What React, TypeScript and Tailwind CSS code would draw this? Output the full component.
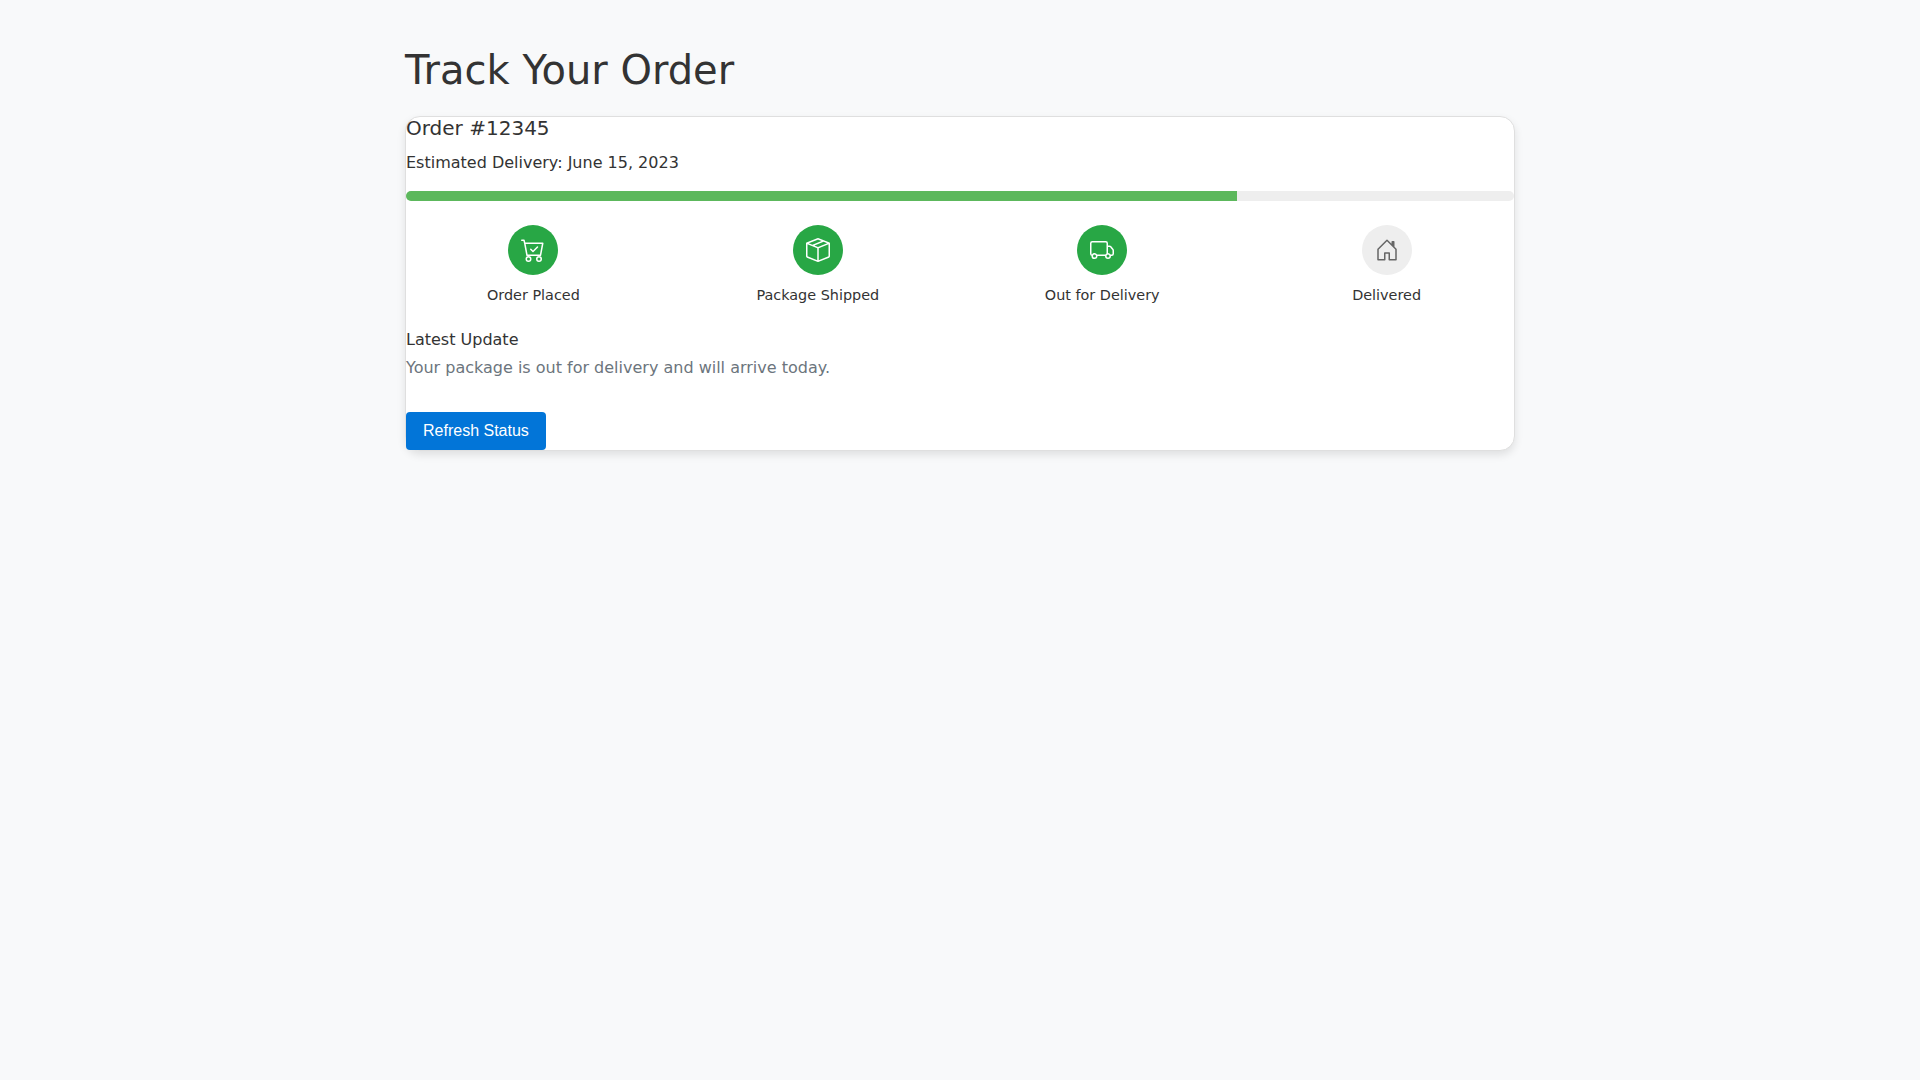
import React from "react";
import { BsCartCheck, BsBoxSeam, BsTruck, BsHouseDoor } from "react-icons/bs";

const steps = [
  { label: "Order Placed", icon: <BsCartCheck size={24} />, done: true },
  { label: "Package Shipped", icon: <BsBoxSeam size={24} />, done: true },
  { label: "Out for Delivery", icon: <BsTruck size={24} />, done: true },
  { label: "Delivered", icon: <BsHouseDoor size={24} />, done: false },
];

export default function App() {
  return (
    <div className="min-h-screen bg-[#f8f9fa] font-['DejaVu_Sans',sans-serif] text-[#333333] text-[16px] leading-[24px]">
      <div className="max-w-[1140px] mx-auto px-[15px] pt-[46px]">
        <h1 className="text-[40px] leading-[48px] font-normal mb-[22px]">Track Your Order</h1>
        <div className="bg-white border border-[#dfdfdf] rounded-[15px] shadow-[0_4px_8px_rgba(0,0,0,0.1)]">
          <h2 className="text-[20px] leading-[24px] font-normal mb-[11px] -mt-[1px]">Order #12345</h2>
          <p className="mb-[16px] text-[16px] leading-[24px]">Estimated Delivery: June 15, 2023</p>
          <div className="h-[10px] rounded-[5px] bg-[#eeeeee] overflow-hidden">
            <div className="h-full w-[75%] bg-[#5cb85c]" />
          </div>
          <div className="flex justify-between mt-[24px] mb-[22px]">
            {steps.map((s) => (
              <div key={s.label} className="w-[23%] flex flex-col items-center text-center">
                <div className={s.done ? "w-[50px] h-[50px] rounded-full flex items-center justify-center bg-[#28a745] text-white" : "w-[50px] h-[50px] rounded-full flex items-center justify-center bg-[#eeeeee] text-[#666666]"}>
                  {s.icon}
                </div>
                <div className="mt-[9px] text-[14.4px] leading-[22px]">{s.label}</div>
              </div>
            ))}
          </div>
          <div className="mb-[32px]">
            <h3 className="text-[16px] leading-[24px] font-normal mb-[4px]">Latest Update</h3>
            <p className="text-[#6c757d] text-[16px] leading-[24px]">Your package is out for delivery and will arrive today.</p>
          </div>
          <button className="block bg-[#0275d8] text-white rounded-[4px] px-[17px] h-[38px] text-[16px] font-['Liberation_Sans',sans-serif]">Refresh Status</button>
        </div>
      </div>
    </div>
  );
}
